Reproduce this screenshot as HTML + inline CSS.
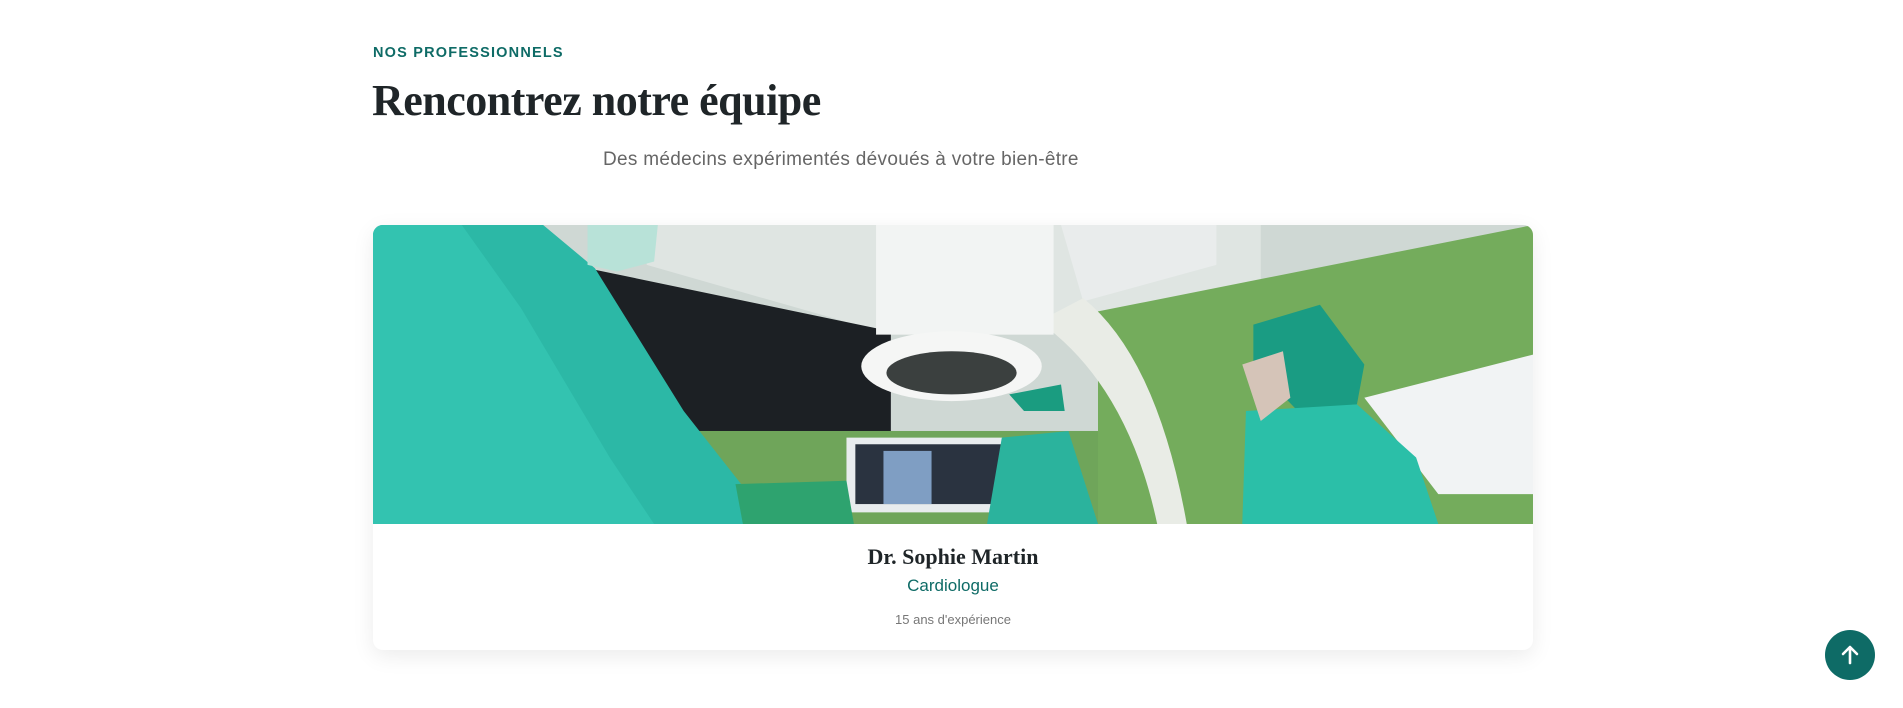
<!DOCTYPE html>
<html><head><meta charset="utf-8"><style>
*{margin:0;padding:0;box-sizing:border-box}
body{width:1903px;height:708px;background:#fff;position:relative;overflow:hidden;font-family:"Liberation Sans",sans-serif}
.kick{position:absolute;left:373px;top:45px;font-size:14.5px;font-weight:700;color:#0e6b66;letter-spacing:1.2px}
h1{position:absolute;left:372px;top:75px;font-family:"Liberation Serif",serif;font-weight:700;font-size:44px;color:#1f2528;letter-spacing:-0.5px}
.sub{position:absolute;left:603px;top:149px;font-size:19px;color:#666;letter-spacing:0.3px}
.card{position:absolute;left:373px;top:225px;width:1160px;height:425px;border-radius:10px;background:#fff;box-shadow:0 6px 22px rgba(0,0,0,.08);overflow:hidden}
.img{position:absolute;left:0;top:0;width:1160px;height:299px}
.name{position:absolute;top:544px;left:373px;width:1160px;text-align:center;font-family:"Liberation Serif",serif;font-weight:700;font-size:22px;color:#1f2528}
.role{position:absolute;top:576px;left:373px;width:1160px;text-align:center;font-size:17px;color:#0e6b66}
.exp{position:absolute;top:612px;left:373px;width:1160px;text-align:center;font-size:13px;color:#777}
.top{position:absolute;left:1825px;top:630px;width:50px;height:50px;border-radius:50%;background:#0e6b66}
</style></head><body>
<div class="kick">NOS PROFESSIONNELS</div>
<h1>Rencontrez notre équipe</h1>
<div class="sub">Des médecins expérimentés dévoués à votre bien-être</div>
<div class="card">
<svg class="img" viewBox="0 0 1568 900" preserveAspectRatio="none">
<rect width="1568" height="900" fill="#cfd8d4"/>
<polygon points="370,0 1200,0 1200,250 1000,280 700,330 370,120" fill="#dfe5e2"/>
<polygon points="290,130 700,320 700,680 430,620 290,600" fill="#1c2024"/>
<rect x="420" y="620" width="700" height="280" fill="#6fa55a"/>
<polygon points="980,260 1568,0 1568,900 980,900" fill="#74ac5c"/>
<polygon points="1340,520 1568,390 1568,810 1440,810" fill="#f1f3f4"/>
<polygon points="930,0 1140,0 1140,120 960,230" fill="#e9ecec"/>
<rect x="640" y="640" width="225" height="225" fill="#e8ecee"/>
<rect x="652" y="660" width="200" height="180" fill="#2a3340"/>
<rect x="690" y="680" width="65" height="160" fill="#7f9ec3"/>
<path d="M900 290 Q1020 480 1060 900 L1100 900 Q1060 400 960 220 Z" fill="#e9ece6"/>
<rect x="680" y="0" width="240" height="330" fill="#f2f4f3"/>
<ellipse cx="782" cy="425" rx="122" ry="105" fill="#f5f6f5"/>
<ellipse cx="782" cy="445" rx="88" ry="65" fill="#3b403f"/>
<path d="M0 0 L230 0 L300 130 L420 560 L540 900 L0 900Z" fill="#2cb8a6"/>
<path d="M0 0 L120 0 L200 250 L320 700 L380 900 L0 900Z" fill="#33c3b0"/>
<path d="M290 0 L385 0 L380 110 L330 140 L290 120Z" fill="#b8e2d8"/>
<path d="M490 780 L640 770 L650 900 L500 900Z" fill="#2ea36f"/>
<path d="M860 510 L930 480 L935 560 L880 560Z" fill="#1a9c80"/>
<path d="M850 640 L940 620 L980 900 L830 900Z" fill="#2bb39d"/>
<path d="M1190 300 L1280 240 L1340 420 L1330 540 L1250 560 L1190 420Z" fill="#1a9c83"/>
<path d="M1180 560 L1330 540 L1410 700 L1440 900 L1175 900Z" fill="#2bbfa8"/>
<path d="M1175 420 L1230 380 L1240 520 L1200 590Z" fill="#d5c4b8"/>
</svg>
</div>
<div class="name">Dr. Sophie Martin</div>
<div class="role">Cardiologue</div>
<div class="exp">15 ans d'expérience</div>
<div class="top"><svg width="50" height="50" viewBox="0 0 50 50"><path d="M25 33V17M18 24l7-7 7 7" stroke="#fff" stroke-width="2.6" fill="none" stroke-linecap="round" stroke-linejoin="round"/></svg></div>
</body></html>
